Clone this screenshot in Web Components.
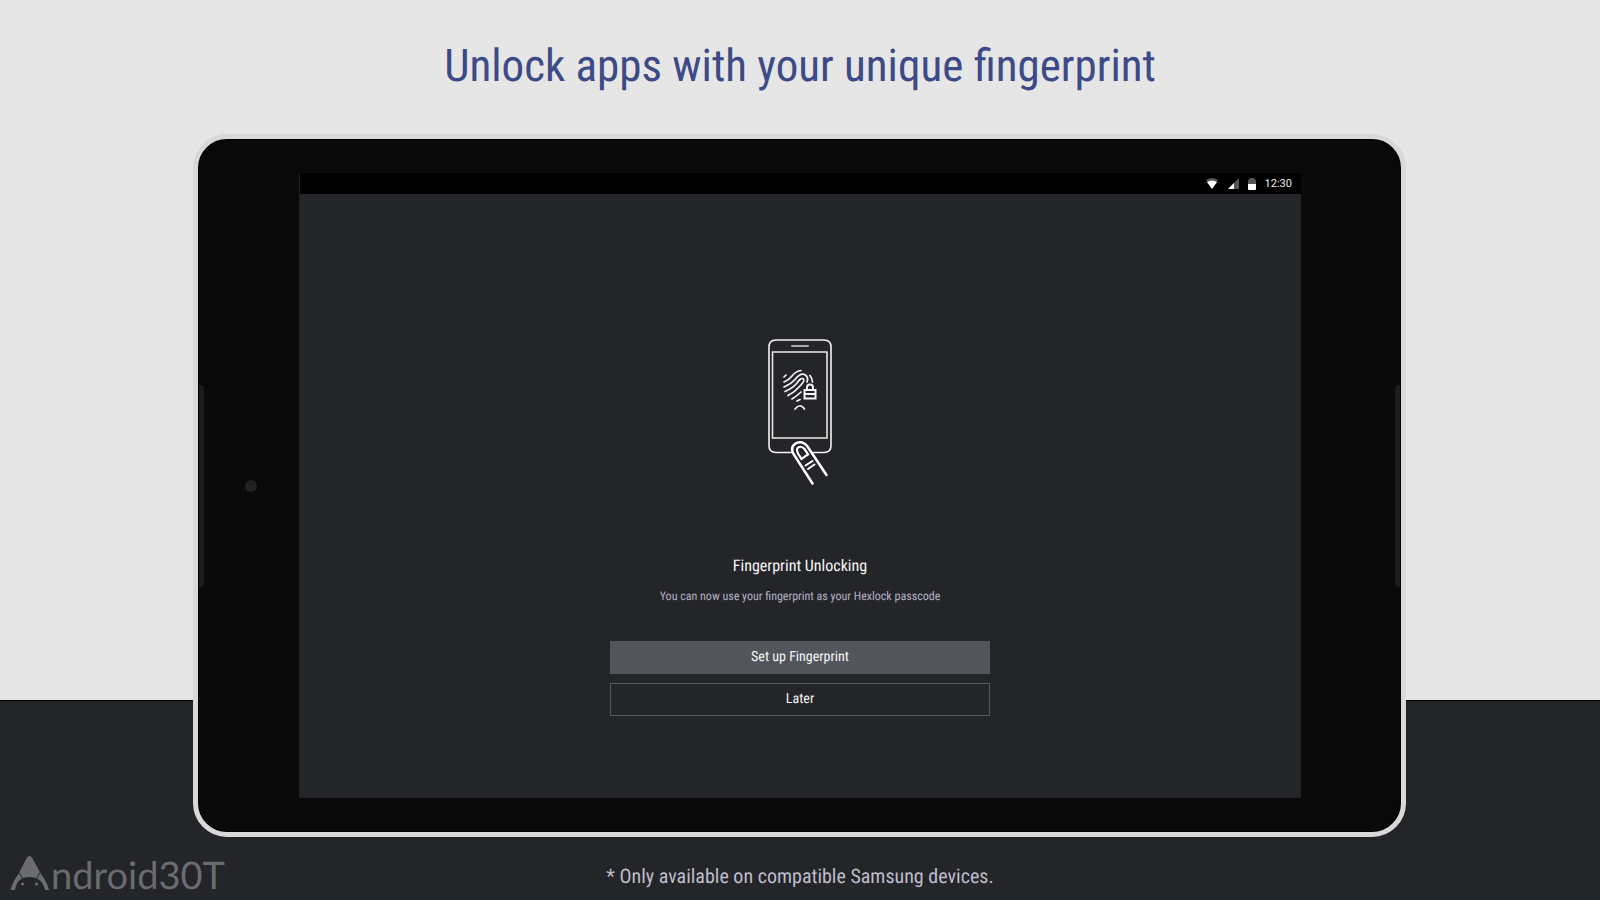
<!DOCTYPE html>
<html lang="en">
<head>
<meta charset="utf-8">
<title>Fingerprint Unlocking</title>
<style>
  body {
    margin: 0;
    font-family: "Roboto Condensed", "Liberation Sans Narrow", Roboto, sans-serif;
    text-rendering: geometricPrecision;
  }
</style>
</head>
<body>
<promo-page>
  <span slot="title">Unlock apps with your unique fingerprint</span>
  <tablet-frame>
    <status-bar time="12:30"></status-bar>
    <unlock-prompt>
      <phone-art slot="art"></phone-art>
      <span slot="heading">Fingerprint Unlocking</span>
      <span slot="detail">You can now use your fingerprint as your Hexlock passcode</span>
      <flat-button slot="actions" primary>Set up Fingerprint</flat-button>
      <flat-button slot="actions">Later</flat-button>
    </unlock-prompt>
  </tablet-frame>
  <brand-mark slot="brand">ndroid30T</brand-mark>
  <span slot="note">* Only available on compatible Samsung devices.</span>
</promo-page>

<script>
const define = (name, html, setup) => {
  const template = document.createElement('template');
  template.innerHTML = html;
  customElements.define(name, class extends HTMLElement {
    constructor() {
      super();
      this.attachShadow({ mode: 'open' });
      this.shadowRoot.appendChild(template.content.cloneNode(true));
    }
    connectedCallback() {
      if (setup) setup(this, this.shadowRoot);
    }
  });
};

define('promo-page', `
  <style>
    :host {
      display: grid;
      grid-template-rows: 134px 1fr 63px;
      min-height: 100vh;
      background: linear-gradient(#e6e6e6 calc(100% - 200px), #000 0, #000 calc(100% - 199px), #242529 0);
    }
    header {
      display: flex;
      justify-content: center;
      align-items: center;
      padding-bottom: 2px;
    }
    h1 {
      margin: 0;
      color: #3d4a87;
      font-size: 45px;
      line-height: 54px;
      font-weight: 400;
    }
    main {
      display: grid;
      padding: 0 194px 0 193px;
    }
    footer {
      display: grid;
      grid-template-columns: 1fr auto 1fr;
      align-items: center;
    }
    p {
      margin: 0;
      padding-bottom: 12px;
      align-self: end;
      color: #bdbdcb;
      font-size: 20px;
      line-height: 24px;
    }
  </style>
  <header><h1><slot name="title"></slot></h1></header>
  <main><slot></slot></main>
  <footer><slot name="brand"></slot><p><slot name="note"></slot></p></footer>
`);

define('tablet-frame', `
  <style>
    :host {
      display: grid;
      grid-template-columns: 101px 1fr 100px;
      box-sizing: border-box;
      border: 5px solid #d9d9d9;
      border-radius: 34px;
      background: #090909;
      box-shadow: inset 0 0 0 1px #000;
    }
    .bezel {
      display: flex;
      align-items: center;
      justify-content: space-between;
      padding: 0 1px;
    }
    .bezel.right { justify-content: flex-end; }
    .grip {
      width: 5px;
      height: 202px;
      border-radius: 0 4px 4px 0;
      background: #1c1c1c;
    }
    .right .grip { border-radius: 4px 0 0 4px; }
    .camera {
      width: 12px;
      height: 12px;
      margin: 0 auto;
      border-radius: 50%;
      background: #212121;
    }
    .screen {
      display: flex;
      flex-direction: column;
      margin: 34px 0;
      background: #242529;
      box-shadow: inset 0 0 0 1px #20222b;
    }
  </style>
  <div class="bezel"><div class="grip"></div><div class="camera"></div></div>
  <div class="screen"><slot></slot></div>
  <div class="bezel right"><div class="grip"></div></div>
`);

define('status-bar', `
  <style>
    :host {
      display: flex;
      align-items: center;
      justify-content: flex-end;
      gap: 9px;
      height: 21px;
      padding-right: 9px;
      margin-left: 1px;
      background: #000;
      color: #eee;
      font: 11px/20px Roboto, sans-serif;
    }
    svg { display: block; }
  </style>
  <svg width="12" height="11" viewBox="0 0 12 11"><path d="M0 2Q6-2 12 2L6 11z" fill="#555"/><path d="M1 4Q6 1 11 4L6 11z" fill="#fff"/></svg>
  <svg width="12" height="11" viewBox="0 0 12 11"><path d="M12 0v11H1z" fill="#555"/><path d="M7 5v6H1z" fill="#fff"/></svg>
  <svg width="8" height="12" viewBox="0 0 8 12"><path d="M2 0h4v1q2 0 2 2v4H0V3q0-2 2-2z" fill="#555"/><path d="M0 6h8v5q0 1-1 1H1q-1 0-1-1z" fill="#fff"/></svg>
  <time></time>
`, (host, root) => {
  root.querySelector('time').textContent = host.getAttribute('time');
});

define('unlock-prompt', `
  <style>
    :host {
      flex: 1;
      display: flex;
      flex-direction: column;
      align-items: center;
      justify-content: center;
      padding: 62px 20px 0;
      text-align: center;
    }
    h2 {
      margin: 70px 0 0;
      color: #f5f5f5;
      font-size: 16px;
      line-height: 20px;
      font-weight: 400;
    }
    p {
      margin: 12px 0 0;
      color: #b4b0c4;
      font-size: 12px;
      line-height: 16px;
    }
    .actions {
      display: flex;
      flex-direction: column;
      gap: 9px;
      width: 100%;
      max-width: 380px;
      margin-top: 37px;
    }
  </style>
  <slot name="art"></slot>
  <h2><slot name="heading"></slot></h2>
  <p><slot name="detail"></slot></p>
  <div class="actions"><slot name="actions"></slot></div>
`);

define('phone-art', `
  <style>
    :host { display: block; }
    svg { display: block; }
  </style>
  <svg width="66" height="148" viewBox="17 8 66 148" fill="none" stroke="#f4f4f4" stroke-width="1.6" stroke-linecap="round" aria-hidden="true">
    <path d="M43 122.500H26q-7 0-7-7V17q0-7 7-7h48q7 0 7 7v98.500q0 7-7 7H62"/>
    <path d="M22.500 22H77v86H22.500z" stroke-linecap="butt" stroke="#e8e8e3"/>
    <path d="M42 16h16" stroke="#aaa9b0" stroke-width="2"/>
    <g stroke-width="1.700">
      <path d="M34 47l2-2M34 52Q39 50 42 46Q46 41 51 40.500M34 57Q41 54 45 49.500Q50 43 54.500 44.500Q59 47 57 52M35 61.500Q43 58 47 53Q51 47 53.500 49Q55 51 50 56Q45 62 38 65.500M42 69Q47 66 51 62M47 71l3-1.500M60 45.500Q62 48 62.500 52"/>
      <path d="M45 79q5-6.500 9.500 0"/>
    </g>
    <path d="M54.500 60h11v8.500h-11zM54.500 64h11M57 59v-1.500q0-3 3-3t3 3V59" stroke-width="2"/>
    <g stroke="#fff" stroke-width="2.500">
      <path d="M62.500 153.500L43.500 124q-3.500-7 2-10.500q7-3.500 12 3L76.500 145"/>
      <path d="M48 123.500q-2.500-5 1-6.500q3-1 5.500 2l3.500 5.500L51.500 129z" stroke-width="2.200"/>
      <path d="M55.500 135.500l7-4.500M58 139l6.500-4.500" stroke-width="2"/>
    </g>
  </svg>
`);

define('flat-button', `
  <style>
    :host { display: block; }
    button {
      display: block;
      width: 100%;
      height: 33px;
      padding: 0 0 2px;
      border: 1px solid #55565d;
      border-radius: 0;
      background: transparent;
      color: #f5f5f5;
      font: inherit;
      font-size: 14px;
      line-height: 18px;
      text-rendering: inherit;
      cursor: pointer;
    }
    :host([primary]) button { background: #53555d; }
    button:hover { border-color: #7a7c86; }
  </style>
  <button type="button"><slot></slot></button>
`);

define('brand-mark', `
  <style>
    :host {
      display: flex;
      align-items: flex-end;
      gap: 1px;
      padding-left: 10px;
      padding-bottom: 9px;
      align-self: end;
      color: #6b6c6f;
      font: 38px/32px Lato, sans-serif;
    }
    svg { display: block; flex: none; }
  </style>
  <svg width="40" height="36" viewBox="10 15 40 36" fill="currentColor" aria-hidden="true">
    <path d="M27 17.500q2.500-3 5 0L41 34q6 8 8 16h-4Q42 37 29.500 37T15 50h-4.500q2-8 8-16z"/>
    <path d="M19 32.500l3.500 6M40 32.500l-3.500 6" stroke="#242529"/>
    <circle cx="22.500" cy="44" r="1.600"/><circle cx="36.500" cy="44" r="1.600"/>
  </svg>
  <span><slot></slot></span>
`);
</script>
</body>
</html>
